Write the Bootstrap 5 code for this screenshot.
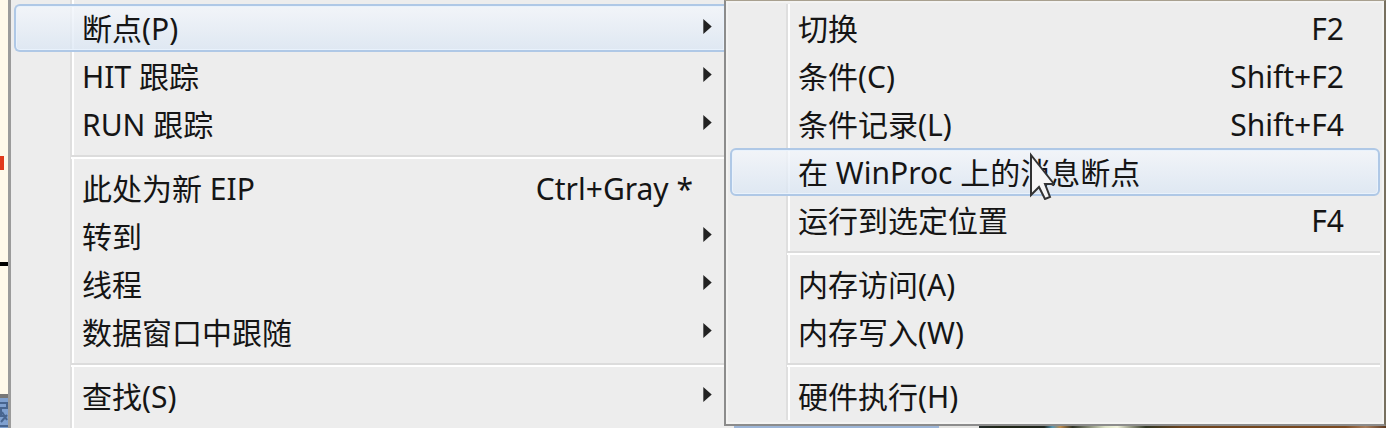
<!DOCTYPE html>
<html lang="zh-CN">
<head>
<meta charset="utf-8">
<meta name="viewport" content="width=device-width, initial-scale=1">
<title>断点</title>
<link href="https://cdn.jsdelivr.net/npm/bootstrap@5.3.0/dist/css/bootstrap.min.css" rel="stylesheet">
<style>
  body { font-family: "Noto Sans", "Noto Sans CJK SC", sans-serif; font-size: 30px; color: #151515; background: #ededed; }
  .desk { width: 8px; background: #fff9ea; }
  .mark-red { height: 14px; width: 4px; margin-top: 156px; background: #e23a1c; }
  .mark-line { height: 4px; margin-top: 92px; background: #000; }
  .mark-win { height: 34px; margin-top: 128px; border-top: 4px solid #777; background: #7fa0cf; }
  .mark-win svg { display: block; }
  .pane { background: #ededed; list-style: none; }
  .pane-main { flex: 0 0 716px; border-left: 3px solid #9b9b9b; padding: 4px 0 0 3px; }
  .pane-sub { border: 2px solid #8c8c8c; border-top: 1px solid #a8a08f; border-right-color: #77705f; padding: 3px 4px 4px 4px; box-shadow: inset 0 0 0 2px #f3f3f2; }
  .pane::before { content: ""; position: absolute; top: 0; bottom: 0; left: 59px; width: 4px; border-left: 2px solid #dfdfdf; border-right: 2px solid #fff; }
  .pane-sub::before { top: 3px; bottom: 4px; left: 60px; }
  .entry { position: relative; display: flex; align-items: center; width: 100%; height: 48px; padding: 2px 34px 0 66px; border: 2px solid transparent; border-radius: 6px; background: none; color: inherit; text-align: left; white-space: nowrap; line-height: 42px; }
  .pane-main .entry { padding-right: 10px; }
  .entry.hot { border-color: #afc8e6; background: linear-gradient(rgba(243,246,251,.8), rgba(218,230,244,.75)); box-shadow: inset 0 0 0 1px #e9f2fc; }
  .pane-main .entry.hot { border-right: 0; border-radius: 6px 0 0 6px; padding-right: 12px; }
  .keys { margin-left: auto; }
  .pane-main .keys { margin-right: 19px; }
  .arrow { margin: 0 0 5px auto; width: 9px; height: 15px; }
  .rule { position: relative; height: 4px; margin: 7px 0 5px 57px; border-top: 2px solid #dcdcdc; border-bottom: 2px solid #fff; }
  .pointer { position: absolute; left: 297px; top: 2px; }
  .below { height: 4px; }
  .below-blue { flex: 0 0 31%; margin-left: 10px; background: #9db6d8; }
  .below-gap { flex: 0 0 6%; background: #e4e4e2; }
  .below-photo { background: linear-gradient(90deg, #222b2a, #202617 5%, #20251c 16%, #5195b4 18%, #c08c4d 20%, #2c3023 23%, #dfe5c9 31%, #f2f4dd 34%, #303522 41%, #6d431c 50%, #7c4a20 90%, #a87e5d 95%, #5d3920); }
</style>
</head>
<body class="overflow-hidden">
<div class="d-flex vh-100 overflow-hidden">
  <div class="desk flex-shrink-0">
    <div class="mark-red"></div><div class="mark-line"></div>
    <div class="mark-win"><svg width="8" height="30" viewBox="0 0 8 30" fill="none" stroke="#48658f" stroke-width="2"><path d="M0 5H7V10H1V18H6M2 14L7 22M7 17L1 24M0 28H8"/></svg></div>
  </div>
  <ul class="pane pane-main position-relative m-0">
    <li><button class="entry hot">断点(P)<svg class="arrow" viewBox="0 0 9 16"><path d="M0 0L9 8L0 16Z" fill="#222"/></svg></button></li>
    <li><button class="entry">HIT 跟踪<svg class="arrow" viewBox="0 0 9 16"><path d="M0 0L9 8L0 16Z" fill="#222"/></svg></button></li>
    <li><button class="entry">RUN 跟踪<svg class="arrow" viewBox="0 0 9 16"><path d="M0 0L9 8L0 16Z" fill="#222"/></svg></button></li>
    <li class="rule"></li>
    <li><button class="entry">此处为新 EIP<span class="keys">Ctrl+Gray *</span></button></li>
    <li><button class="entry">转到<svg class="arrow" viewBox="0 0 9 16"><path d="M0 0L9 8L0 16Z" fill="#222"/></svg></button></li>
    <li><button class="entry">线程<svg class="arrow" viewBox="0 0 9 16"><path d="M0 0L9 8L0 16Z" fill="#222"/></svg></button></li>
    <li><button class="entry">数据窗口中跟随<svg class="arrow" viewBox="0 0 9 16"><path d="M0 0L9 8L0 16Z" fill="#222"/></svg></button></li>
    <li class="rule"></li>
    <li><button class="entry">查找(S)<svg class="arrow" viewBox="0 0 9 16"><path d="M0 0L9 8L0 16Z" fill="#222"/></svg></button></li>
  </ul>
  <div class="flex-fill">
    <ul class="pane pane-sub position-relative m-0">
      <li><button class="entry">切换<span class="keys">F2</span></button></li>
      <li><button class="entry">条件(C)<span class="keys">Shift+F2</span></button></li>
      <li><button class="entry">条件记录(L)<span class="keys">Shift+F4</span></button></li>
      <li><button class="entry hot">在 WinProc 上的消息断点
        <svg class="pointer" width="26" height="48" viewBox="0 0 26 48"><path d="M2 3V43L10 35L16 47L21 45L16 32H25Z" fill="#f6f6f6" stroke="#333" stroke-width="2"/></svg></button></li>
      <li><button class="entry">运行到选定位置<span class="keys">F4</span></button></li>
      <li class="rule"></li>
      <li><button class="entry">内存访问(A)</button></li>
      <li><button class="entry">内存写入(W)</button></li>
      <li class="rule"></li>
      <li><button class="entry">硬件执行(H)</button></li>
    </ul>
    <div class="below d-flex"><div class="below-blue"></div><div class="below-gap"></div><div class="below-photo flex-fill"></div></div>
  </div>
</div>
<script src="https://cdn.jsdelivr.net/npm/bootstrap@5.3.0/dist/js/bootstrap.bundle.min.js"></script>
</body>
</html>
